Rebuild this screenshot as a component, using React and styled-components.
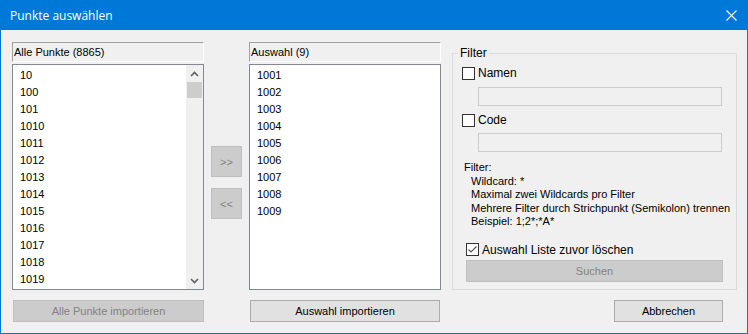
import React from 'react'
import styled, { createGlobalStyle } from 'styled-components'

const GlobalStyle = createGlobalStyle`
  html, body {
    margin: 0;
    padding: 0;
    background: #f0f0f0;
  }
  * {
    box-sizing: border-box;
  }
`

const Window = styled.div`
  width: 748px;
  height: 334px;
  display: flex;
  flex-direction: column;
  background: #f0f0f0;
  border: 1px solid #0078d7;
  border-top: none;
  font-family: "Liberation Sans", Arial, sans-serif;
  font-size: 11px;
  color: #000;
  overflow: hidden;
`

const TitleBar = styled.div`
  height: 30px;
  margin: 0 -1px;
  display: flex;
  align-items: center;
  justify-content: space-between;
  padding: 0 11px 0 10px;
  background: #0078d7;
  color: #fff;
  font-family: "Open Sans", "Noto Sans", sans-serif;
  font-size: 12px;
`

const Body = styled.div`
  display: grid;
  grid-template-columns: 192px 45px 192px 1fr;
  grid-template-rows: 248px 22px;
  row-gap: 10px;
  padding: 12px 10px 0 11px;
`

const Column = styled.div`
  display: flex;
  flex-direction: column;
  gap: 2px;
`

const Header = styled.div`
  height: 20px;
  display: flex;
  align-items: center;
  padding-left: 1px;
  border-top: 1px solid #a0a0a0;
  border-left: 1px solid #a0a0a0;
  border-bottom: 1px solid #fff;
  border-right: 1px solid #fff;
`

const ListBox = styled.div`
  height: 226px;
  display: flex;
  background: #fff;
  border: 1px solid #828790;
`

const Items = styled.div`
  flex: 1;
  padding: 2px 0 0 7px;
  line-height: 17px;
  overflow: hidden;
`

const ScrollBar = styled.div`
  width: 17px;
  display: flex;
  flex-direction: column;
  align-items: center;
  background: #f0f0f0;
`

const ArrowCell = styled.div`
  width: 15px;
  height: 17px;
  display: flex;
  align-items: center;
  justify-content: center;
`

const Thumb = styled.div`
  width: 15px;
  height: 16px;
  background: #cdcdcd;
`

const Track = styled.div`
  flex: 1;
`

const Middle = styled.div`
  display: flex;
  flex-direction: column;
  align-items: center;
  gap: 11px;
  padding: 104px 0 0 0;
`

const Button = styled.button`
  height: ${p => (p.$h ? p.$h : 22)}px;
  width: ${p => (p.$w ? `${p.$w}px` : 'auto')};
  margin-left: ${p => p.$ml || 0}px;
  margin-top: ${p => p.$mt || 0}px;
  padding: 0;
  font-family: "Liberation Sans", Arial, sans-serif;
  font-size: 11px;
  color: ${p => (p.disabled ? '#838383' : '#000')};
  background: ${p => (p.disabled ? '#cccccc' : '#e1e1e1')};
  border: 1px solid ${p => (p.disabled ? '#bfbfbf' : '#adadad')};
  border-radius: 0;
`

const GroupBox = styled.fieldset`
  margin: 4px 0 0 11px;
  height: 244px;
  padding: 0 0 0 9px;
  border: 1px solid #dcdcdc;
  display: flex;
  flex-direction: column;
  min-width: 0;
`

const Legend = styled.legend`
  margin-left: -4px;
  padding: 0 2px;
  font-size: 12px;
  line-height: 14px;
`

const CheckRow = styled.label`
  display: flex;
  align-items: center;
  gap: 3px;
  height: 14px;
  margin-top: ${p => p.$mt || 0}px;
  margin-left: ${p => p.$ml || 0}px;
  font-size: 12px;
`

const Box = styled.span`
  width: 13px;
  height: 13px;
  display: flex;
  align-items: center;
  justify-content: center;
  background: #fff;
  border: 1px solid #333;
`

const TextField = styled.div`
  width: 244px;
  height: 19px;
  margin: ${p => p.$mt}px 0 0 16px;
  background: #f0f0f0;
  border: 1px solid #cccccc;
`

const Hint = styled.div`
  margin: 9px 0 0 2px;
  line-height: 13.5px;
  font-size: 11px;
`

const HintLine = styled.div`
  padding-left: ${p => (p.$indent ? 7 : 0)}px;
  white-space: nowrap;
`

const Footer = styled.div`
  grid-column: 4;
  display: flex;
  justify-content: flex-end;
  padding-right: 14px;
`

const Chevron = ({ up }) => (
  <svg width="9" height="6" viewBox="0 0 9 6">
    <path
      d={up ? 'M1 5 L4.5 1.5 L8 5' : 'M1 1 L4.5 4.5 L8 1'}
      fill="none"
      stroke="#606060"
      strokeWidth="1.6"
    />
  </svg>
)

const allPoints = ['10', '100', '101', '1010', '1011', '1012', '1013', '1014', '1015', '1016', '1017', '1018', '1019']
const selection = ['1001', '1002', '1003', '1004', '1005', '1006', '1007', '1008', '1009']

export default function App() {
  return (
    <>
      <GlobalStyle />
      <Window>
        <TitleBar>
          <span>Punkte auswählen</span>
          <svg width="11" height="11" viewBox="0 0 11 11">
            <path d="M0.5 0.5 L10.5 10.5 M10.5 0.5 L0.5 10.5" stroke="#fff" strokeWidth="1.1" />
          </svg>
        </TitleBar>
        <Body>
          <Column>
            <Header>Alle Punkte (8865)</Header>
            <ListBox>
              <Items>
                {allPoints.map(p => <div key={p}>{p}</div>)}
              </Items>
              <ScrollBar>
                <ArrowCell><Chevron up /></ArrowCell>
                <Thumb />
                <Track />
                <ArrowCell><Chevron /></ArrowCell>
              </ScrollBar>
            </ListBox>
          </Column>
          <Middle>
            <Button disabled $w={31} $h={31}>&gt;&gt;</Button>
            <Button disabled $w={31} $h={31}>&lt;&lt;</Button>
          </Middle>
          <Column>
            <Header>Auswahl (9)</Header>
            <ListBox>
              <Items>
                {selection.map(p => <div key={p}>{p}</div>)}
              </Items>
            </ListBox>
          </Column>
          <GroupBox>
            <Legend>Filter</Legend>
            <CheckRow $mt={6}><Box />Namen</CheckRow>
            <TextField $mt={7} />
            <CheckRow $mt={7}><Box />Code</CheckRow>
            <TextField $mt={6} />
            <Hint>
              <HintLine>Filter:</HintLine>
              <HintLine $indent>Wildcard: *</HintLine>
              <HintLine $indent>Maximal zwei Wildcards pro Filter</HintLine>
              <HintLine $indent>Mehrere Filter durch Strichpunkt (Semikolon) trennen</HintLine>
              <HintLine $indent>Beispiel: 1;2*;*A*</HintLine>
            </Hint>
            <CheckRow $mt={14} $ml={4}>
              <Box>
                <svg width="11" height="11" viewBox="0 0 11 11">
                  <path d="M1.5 5.5 L4 8 L9.5 2.5" fill="none" stroke="#555" strokeWidth="1.2" />
                </svg>
              </Box>
              Auswahl Liste zuvor löschen
            </CheckRow>
            <Button disabled $w={257} $ml={4} $mt={3}>Suchen</Button>
          </GroupBox>
          <Button disabled $w={191} $ml={1}>Alle Punkte importieren</Button>
          <div />
          <Button $w={190} $ml={1}>Auswahl importieren</Button>
          <Footer>
            <Button $w={109}>Abbrechen</Button>
          </Footer>
        </Body>
      </Window>
    </>
  )
}
